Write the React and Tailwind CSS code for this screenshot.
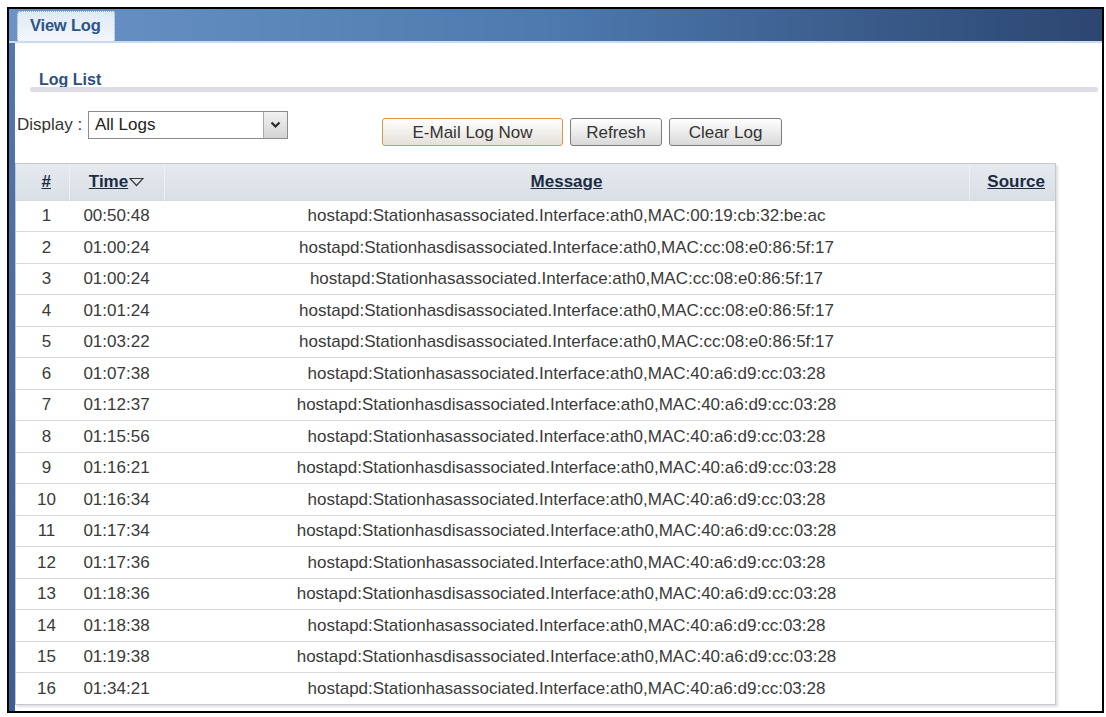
import React from "react";

const MAC_A = "cc:08:e0:86:5f:17";
const MAC_B = "40:a6:d9:cc:03:28";

const logs = [
  ["00:50:48", "associated", "00:19:cb:32:be:ac"],
  ["01:00:24", "disassociated", MAC_A],
  ["01:00:24", "associated", MAC_A],
  ["01:01:24", "disassociated", MAC_A],
  ["01:03:22", "disassociated", MAC_A],
  ["01:07:38", "associated", MAC_B],
  ["01:12:37", "disassociated", MAC_B],
  ["01:15:56", "associated", MAC_B],
  ["01:16:21", "disassociated", MAC_B],
  ["01:16:34", "associated", MAC_B],
  ["01:17:34", "disassociated", MAC_B],
  ["01:17:36", "associated", MAC_B],
  ["01:18:36", "disassociated", MAC_B],
  ["01:18:38", "associated", MAC_B],
  ["01:19:38", "disassociated", MAC_B],
  ["01:34:21", "associated", MAC_B],
];

const Button = ({ children, width, primary }) => (
  <button
    className={`h-[28px] ${width} rounded-[3px] border text-[17px] leading-none text-[#333] bg-gradient-to-b ${
      primary
        ? "border-[#d99a3c] from-[#ffffff] to-[#e4e0da]"
        : "border-[#7c7c7c] from-[#ffffff] to-[#d9d9d9]"
    }`}
  >
    {children}
  </button>
);

const SortArrow = () => (
  <svg width="15" height="10" viewBox="0 0 15 10" className="inline-block ml-[1px] mb-[2px]">
    <path d="M1 1.5 L14 1.5 L7.5 8.5 Z" fill="none" stroke="#3a3a3a" strokeWidth="1.2" />
  </svg>
);

export default function App() {
  return (
    <div className="w-[1106px] h-[717px] bg-white pt-[7px] pl-[7px] font-['Liberation_Sans',Arial,sans-serif]">
      <div className="w-[1097px] h-[706px] border-2 border-black flex flex-col">
        {/* header bar with tab */}
        <div className="h-[34px] shrink-0 flex flex-col bg-gradient-to-r from-[#6a94c6] via-[#4d79ae] to-[#2c4670]">
          <div className="flex-1 flex items-end pl-[8px]">
            <div className="h-[30px] w-[98px] rounded-tl-[4px] rounded-tr-[2px] border-t border-l border-r border-dotted border-[#8ea9cc] bg-gradient-to-b from-[#dfe9f6] to-[#f3f7fc] flex items-center pl-[12px] pb-[2px]">
              <span className="text-[16.5px] font-bold text-[#2c5588] tracking-[-0.2px]">View Log</span>
            </div>
          </div>
          <div className="h-[2px] bg-[#c8dbf0]" />
        </div>

        <div className="flex-1 flex">
          <div className="w-[6px] bg-gradient-to-b from-[#5079ae] to-[#3c5e93]" />
          <div className="flex-1 flex flex-col">
            <div className="pl-[24px] pt-[25px] h-[44px]">
              <span className="text-[16px] font-bold text-[#2d4f80] leading-[18px]">Log List</span>
            </div>
            <div className="ml-[15px] mr-[4px] h-[5px] rounded-[2px] bg-[#dcdde6]" />

            <div className="flex items-start mt-[19px] h-[35px]">
              <div className="flex items-center h-[28px] pl-[2px]">
                <span className="text-[17px] text-[#333] w-[71px]">Display :</span>
                <div className="w-[200px] h-[28px] border border-[#8c8c8c] bg-white flex items-center">
                  <span className="flex-1 pl-[6px] text-[17px] text-[#222]">All Logs</span>
                  <div className="w-[24px] h-[26px] bg-gradient-to-b from-[#f2f2f2] to-[#d4d4d4] border-l border-[#a9a9a9] flex items-center justify-center">
                    <svg width="11" height="8" viewBox="0 0 11 8">
                      <path d="M1.5 1.5 L5.5 5.5 L9.5 1.5" fill="none" stroke="#2a2a2a" strokeWidth="2.2" />
                    </svg>
                  </div>
                </div>
              </div>
              <div className="flex gap-[7px] ml-[94px] mt-[7px]">
                <Button width="w-[181px]" primary>
                  E-Mail Log Now
                </Button>
                <Button width="w-[92px]">Refresh</Button>
                <Button width="w-[113px]">Clear Log</Button>
              </div>
            </div>

            <div className="mt-[17px] w-[1041px] border border-[#c4c7cb] shadow-[2px_2px_2px_rgba(0,0,0,0.12)]">
              <table className="w-full table-fixed border-collapse text-[17px]">
                <colgroup>
                  <col className="w-[53px]" />
                  <col className="w-[95px]" />
                  <col />
                  <col className="w-[86px]" />
                </colgroup>
                <thead>
                  <tr className="h-[36px] bg-gradient-to-b from-[#e6eaef] to-[#d9dfe6] text-[#1c2c44] font-bold">
                    <th className="pl-[8px] text-center border-r border-[#eef1f4]">
                      <span className="underline">#</span>
                    </th>
                    <th className="text-center border-r border-[#eef1f4]">
                      <span className="underline">Time</span>
                      <SortArrow />
                    </th>
                    <th className="text-center border-r border-[#eef1f4]">
                      <span className="underline">Message</span>
                    </th>
                    <th className="text-right pr-[10px]">
                      <span className="underline">Source</span>
                    </th>
                  </tr>
                </thead>
                <tbody className="text-[#3a3a3a]">
                  {logs.map(([time, kind, mac], i) => (
                    <tr key={i} className="h-[31.5px] border-t border-[#d9d9d9]">
                      <td className="pl-[8px] text-center">{i + 1}</td>
                      <td className="text-center">{time}</td>
                      <td className="text-center whitespace-nowrap">
                        {`hostapd:Stationhas${kind}.Interface:ath0,MAC:${mac}`}
                      </td>
                      <td />
                    </tr>
                  ))}
                </tbody>
              </table>
            </div>
          </div>
        </div>
      </div>
    </div>
  );
}
